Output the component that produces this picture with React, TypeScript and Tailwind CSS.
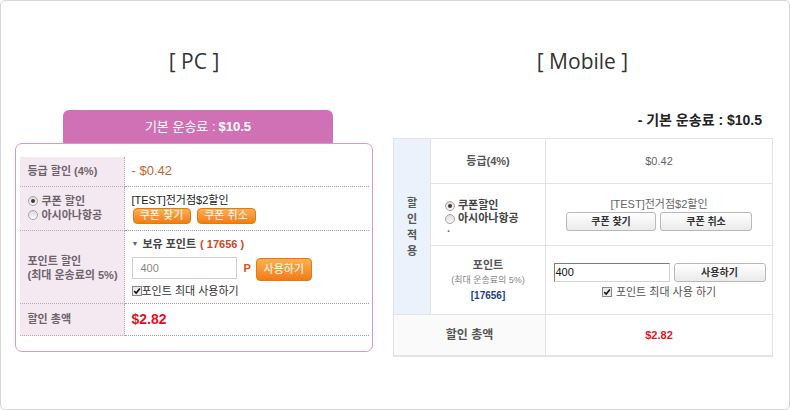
import React from "react";

function Radio({ checked }: { checked?: boolean }) {
  return (
    <span className="inline-flex w-[10px] h-[10px] rounded-full border border-[#a3a3a3] bg-gradient-to-b from-[#dcdcdc] to-[#fafafa] items-center justify-center shrink-0">
      {checked && <span className="w-[4px] h-[4px] rounded-full bg-[#3a3a3a]" />}
    </span>
  );
}

function Check() {
  return (
    <span className="inline-flex w-[10px] h-[10px] border border-[#8a8a8a] bg-[#ebebeb] items-center justify-center shrink-0">
      <svg viewBox="0 0 10 10" className="w-[8px] h-[8px]">
        <path d="M1.5 5.2 L4 7.6 L8.6 2" stroke="#111" strokeWidth="1.9" fill="none" />
      </svg>
    </span>
  );
}

function OrangeBtn({ children, w, h }: { children: React.ReactNode; w: string; h: string }) {
  return (
    <span
      className={`${w} ${h} inline-flex items-center justify-center rounded-[4px] border border-[#e27a12] bg-gradient-to-b from-[#fdb04f] to-[#f07c12] text-white text-[11px] leading-none`}
    >
      {children}
    </span>
  );
}

function GrayBtn({ children, w }: { children: React.ReactNode; w: string }) {
  return (
    <span
      className={`${w} h-[19px] inline-flex items-center justify-center rounded-[3px] border border-[#b9b9b9] bg-gradient-to-b from-white to-[#ebebeb] text-[10px] font-bold text-[#333] leading-none`}
    >
      {children}
    </span>
  );
}

const rowBorder = "border-b border-dotted border-[#a99aa4]";
const labelCell =
  "bg-[#f5e9f1] border-r border-dotted border-[#b9a9b4] pl-[8px] flex items-center text-[11px] font-bold text-[#6f636b] leading-[14px]";

function PC() {
  return (
    <div className="w-[358px] ml-[14px] flex flex-col">
      <div className="mt-[46px] h-[28px] leading-[28px] text-center text-[21px] text-[#333] font-['Open_Sans',sans-serif]">
        [ PC ]
      </div>
      <div className="mt-[35px] ml-[48px] w-[270px] h-[33px] rounded-t-[6px] bg-[#d171b5] flex items-center justify-center text-white text-[13px]">
        <span>기본 운송료 : </span>
        <span className="font-bold ml-[3px]">$10.5</span>
      </div>
      <div className="h-[209px] rounded-[7px] border-[1.5px] border-[#d49ac6] px-[3.5px] pt-[12.5px]">
        <div className="grid grid-cols-[105px_1fr] h-[30px]">
          <div className={`${labelCell} ${rowBorder}`}>등급 할인 (4%)</div>
          <div className={`${rowBorder} pl-[7px] flex items-center text-[13px] text-[#c8622c]`}>- $0.42</div>
        </div>
        <div className="grid grid-cols-[105px_1fr] h-[44px]">
          <div className={`${labelCell} ${rowBorder} flex-col !items-start justify-center gap-[3px]`}>
            <div className="flex items-center gap-[4px] leading-[11px]">
              <Radio checked />
              <span>쿠폰 할인</span>
            </div>
            <div className="flex items-center gap-[4px] leading-[11px]">
              <Radio />
              <span>아시아나항공</span>
            </div>
          </div>
          <div className={`${rowBorder} pl-[7px] flex flex-col justify-center pt-[1px]`}>
            <div className="text-[11px] text-[#222] leading-[13px]">[TEST]전거점$2할인</div>
            <div className="flex gap-[6px] mt-[1px] ml-[1px]">
              <OrangeBtn w="w-[58px]" h="h-[16px]">쿠폰 찾기</OrangeBtn>
              <OrangeBtn w="w-[59px]" h="h-[16px]">쿠폰 취소</OrangeBtn>
            </div>
          </div>
        </div>
        <div className="grid grid-cols-[105px_1fr] h-[73px]">
          <div className={`${labelCell} ${rowBorder} flex-col !items-start justify-center pt-[3px]`}>
            <div>포인트 할인</div>
            <div>(최대 운송료의 5%)</div>
          </div>
          <div className={`${rowBorder} pl-[7px] flex flex-col justify-center pt-[1px]`}>
            <div className="flex items-center text-[11px] font-bold text-[#444] leading-[14px]">
              <span className="text-[7px] mr-[4px] text-[#666]">▼</span>
              <span>보유 포인트</span>
              <span className="ml-[4px] text-[#c9482a]">( 17656 )</span>
            </div>
            <div className="flex items-center mt-[5px]">
              <div className="w-[105px] h-[22px] border border-[#cfcfcf] bg-white pl-[8px] flex items-center text-[11px] text-[#888]">
                400
              </div>
              <span className="ml-[7px] text-[11px] font-bold text-[#d8551f]">P</span>
              <span className="ml-[5px]">
                <OrangeBtn w="w-[56px]" h="h-[23px]">사용하기</OrangeBtn>
              </span>
            </div>
            <div className="flex items-center mt-[3px] text-[11px] text-[#333] leading-[14px]">
              <Check />
              <span>포인트 최대 사용하기</span>
            </div>
          </div>
        </div>
        <div className="grid grid-cols-[105px_1fr] h-[32px]">
          <div className={`${labelCell} ${rowBorder}`}>할인 총액</div>
          <div className={`${rowBorder} pl-[7px] flex items-center text-[14px] font-bold text-[#e0121c]`}>$2.82</div>
        </div>
      </div>
    </div>
  );
}

const td = "border border-[#e3e3e3]";

function Mobile() {
  return (
    <div className="w-[379px] ml-[20px] flex flex-col">
      <div className="mt-[46px] h-[28px] leading-[28px] text-center text-[21px] text-[#333] font-['Open_Sans',sans-serif]">
        [ Mobile ]
      </div>
      <div className="mt-[35px] h-[20px] leading-[20px] text-right pr-[10px] text-[14px] font-bold text-[#222]">
        - 기본 운송료 : $10.5
      </div>
      <table className="mt-[8px] w-[379px] border-collapse table-fixed">
        <colgroup>
          <col className="w-[37px]" />
          <col className="w-[115px]" />
          <col className="w-[227px]" />
        </colgroup>
        <tbody>
          <tr className="h-[45px]">
            <td rowSpan={3} className={`${td} bg-[#ebf2fb] align-middle`}>
              <div className="flex flex-col items-center text-[11px] font-bold text-[#555] leading-[16px]">
                <span>할</span>
                <span>인</span>
                <span>적</span>
                <span>용</span>
              </div>
            </td>
            <td className={`${td} text-center text-[11px] font-bold text-[#555]`}>등급(4%)</td>
            <td className={`${td} text-center text-[11px] text-[#666]`}>$0.42</td>
          </tr>
          <tr className="h-[62px]">
            <td className={`${td} align-middle`}>
              <div className="pl-[14px] flex flex-col text-[11px] font-bold text-[#444] leading-[13px] pt-[1px]">
                <div className="flex items-center gap-[3px]">
                  <Radio checked />
                  <span>쿠폰할인</span>
                </div>
                <div className="flex items-center gap-[3px]">
                  <Radio />
                  <span>아시아나항공</span>
                </div>
                <div className="pl-[2px] leading-[6px] text-[#666]">.</div>
              </div>
            </td>
            <td className={`${td} align-middle`}>
              <div className="flex flex-col items-center">
                <div className="text-[11px] text-[#666] leading-[13px]">[TEST]전거점$2할인</div>
                <div className="flex gap-[4px] mt-[1px]">
                  <GrayBtn w="w-[90px]">쿠폰 찾기</GrayBtn>
                  <GrayBtn w="w-[92px]">쿠폰 취소</GrayBtn>
                </div>
              </div>
            </td>
          </tr>
          <tr className="h-[69px]">
            <td className={`${td} align-middle`}>
              <div className="flex flex-col items-center leading-[15px]">
                <span className="text-[11px] font-bold text-[#555]">포인트</span>
                <span className="text-[9px] text-[#888]">(최대 운송료의 5%)</span>
                <span className="text-[10px] font-bold text-[#1d3d86]">[17656]</span>
              </div>
            </td>
            <td className={`${td} align-middle`}>
              <div className="flex flex-col items-center pt-[2px]">
                <div className="flex items-center gap-[4px] pl-[1px]">
                  <div className="w-[116px] h-[19px] border border-t-[#7c7c7c] border-l-[#7c7c7c] border-r-[#d4d4d4] border-b-[#d4d4d4] pl-[1px] flex items-center text-[11px] text-[#111]">
                    400
                  </div>
                  <GrayBtn w="w-[92px]">사용하기</GrayBtn>
                </div>
                <div className="flex items-center gap-[4px] mt-[3px] text-[11px] text-[#555] leading-[14px]">
                  <Check />
                  <span>포인트 최대 사용 하기</span>
                </div>
              </div>
            </td>
          </tr>
          <tr className="h-[41px]">
            <td colSpan={2} className={`${td} border-b-2 bg-[#fafafa] text-center text-[12px] font-bold text-[#555]`}>
              할인 총액
            </td>
            <td className={`${td} border-b-2 text-center text-[11px] font-bold text-[#e8141c]`}>$2.82</td>
          </tr>
        </tbody>
      </table>
    </div>
  );
}

export default function App() {
  return (
    <div className="w-[790px] h-[410px] bg-white font-['Liberation_Sans','Noto_Sans_CJK_KR',sans-serif]">
      <div className="w-full h-full border border-[#d6d6d6] rounded-[5px] flex">
        <PC />
        <Mobile />
      </div>
    </div>
  );
}
